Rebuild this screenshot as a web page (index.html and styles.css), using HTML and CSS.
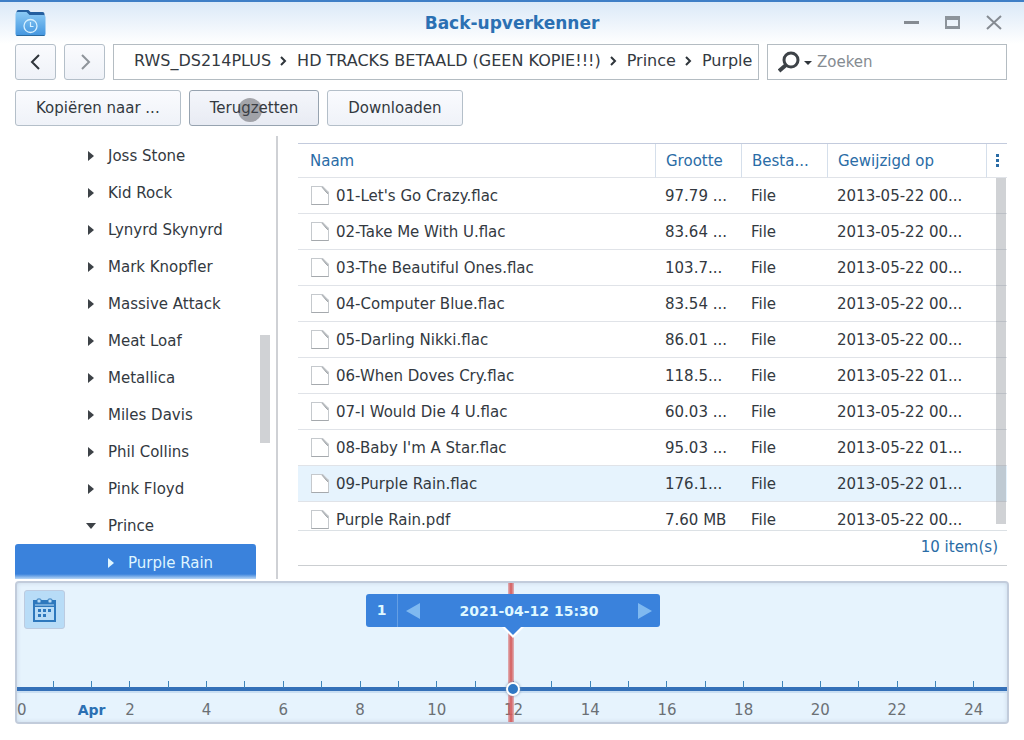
FILE: index.html
```
<!DOCTYPE html>
<html lang="nl">
    <head>
        <meta charset="utf-8" />
        <title>Back-upverkenner</title>
        <link rel="stylesheet" href="styles.css">
    </head>
    <body>
        <header class="titlebar">
            <svg class="app-icon" viewBox="0 0 30 28" aria-hidden="true">
                <defs>
                    <linearGradient id="folder" x1="0" y1="0" x2="0" y2="1">
                        <stop offset="0" stop-color="#8bcaf5" />
                        <stop offset="1" stop-color="#4295df" />
                    </linearGradient>
                </defs>
                <path d="M1 3q0-2 2-2h10l2 2h12q2 0 2 2v4H1z" fill="#245f9f" />
                <path d="M0 5q0-2 2-2h9l3 3h14q2 0 2 2v17q0 2-2 2H2q-2 0-2-2z" fill="url(#folder)" />
                <path d="M1 26.500h28" stroke="#28699f" />
                <circle cx="15" cy="17" r="6.500" fill="none" stroke="#d7f0ff" stroke-width="1.300" />
                <path d="M15 13v4.500h3" fill="none" stroke="#d7f0ff" stroke-width="1.200" />
            </svg>
            <h1>Back-upverkenner</h1>
            <div class="window-buttons">
                <button type="button" aria-label="Minimaliseren">
                    <svg viewBox="0 0 16 16"><path d="M0 7.500h15" stroke="#858b92" stroke-width="3" /></svg>
                </button>
                <button type="button" aria-label="Maximaliseren">
                    <svg viewBox="0 0 16 16"><path d="M0 1h15v13H0zM2 5v6h11V5z" fill="#8d949b" fill-rule="evenodd" /></svg>
                </button>
                <button type="button" aria-label="Sluiten">
                    <svg viewBox="0 0 16 16"><path d="M1 1l14 13M15 1L1 14" stroke="#858b92" stroke-width="2" /></svg>
                </button>
            </div>
        </header>

        <div class="toolbar">
            <button type="button" class="nav-button" aria-label="Vorige">
                <svg viewBox="0 0 16 16"><path d="M11 1L4 8l7 7" fill="none" stroke="#2f353b" stroke-width="2" /></svg>
            </button>
            <button type="button" class="nav-button forward" aria-label="Volgende">
                <svg viewBox="0 0 16 16"><path d="M5 1l7 7-7 7" fill="none" stroke="#8e949a" stroke-width="2" /></svg>
            </button>
            <nav class="path">
                <a href="#">RWS_DS214PLUS</a>
                <svg viewBox="0 0 8 10"><path d="M1 1l4 4-4 4" /></svg>
                <a href="#">HD TRACKS BETAALD (GEEN KOPIE!!!)</a>
                <svg viewBox="0 0 8 10"><path d="M1 1l4 4-4 4" /></svg>
                <a href="#">Prince</a>
                <svg viewBox="0 0 8 10"><path d="M1 1l4 4-4 4" /></svg>
                <a href="#">Purple</a>
            </nav>
            <label class="search">
                <svg viewBox="0 0 36 22" aria-hidden="true">
                    <circle cx="13" cy="9" r="7" fill="none" stroke="#3d4247" stroke-width="3" />
                    <path d="M8 14l-7 6" stroke="#3d4247" stroke-width="4" />
                    <path d="M26 10h8l-4 4z" fill="#2f353b" />
                </svg>
                <input type="text" placeholder="Zoeken" aria-label="Zoeken" />
            </label>
        </div>

        <div class="actions">
            <button type="button">Kopiëren naar ...</button>
            <button type="button" class="pressed">Terugzetten</button>
            <button type="button">Downloaden</button>
        </div>

        <main>
            <div class="tree">
                <ul>
                    <li>Joss Stone</li>
                    <li>Kid Rock</li>
                    <li>Lynyrd Skynyrd</li>
                    <li>Mark Knopfler</li>
                    <li>Massive Attack</li>
                    <li>Meat Loaf</li>
                    <li>Metallica</li>
                    <li>Miles Davis</li>
                    <li>Phil Collins</li>
                    <li>Pink Floyd</li>
                    <li class="open">Prince</li>
                    <li class="selected">Purple Rain</li>
                </ul>
                <div class="tree-thumb"></div>
            </div>

            <div class="files">
                <div class="file-list">
                    <table>
                        <colgroup>
                            <col />
                            <col class="col-size" />
                            <col class="col-type" />
                            <col class="col-date" />
                            <col class="col-menu" />
                        </colgroup>
                        <thead>
                            <tr>
                                <th>Naam</th>
                                <th>Grootte</th>
                                <th>Besta...</th>
                                <th>Gewijzigd op</th>
                                <th class="menu"><button type="button" aria-label="Kolommen"><i></i><i></i><i></i></button></th>
                            </tr>
                        </thead>
                        <tbody>
                            <tr><td><span class="file">01-Let's Go Crazy.flac</span></td><td>97.79 ...</td><td>File</td><td colspan="2">2013-05-22 00...</td></tr>
                            <tr><td><span class="file">02-Take Me With U.flac</span></td><td>83.64 ...</td><td>File</td><td colspan="2">2013-05-22 00...</td></tr>
                            <tr><td><span class="file">03-The Beautiful Ones.flac</span></td><td>103.7...</td><td>File</td><td colspan="2">2013-05-22 00...</td></tr>
                            <tr><td><span class="file">04-Computer Blue.flac</span></td><td>83.54 ...</td><td>File</td><td colspan="2">2013-05-22 00...</td></tr>
                            <tr><td><span class="file">05-Darling Nikki.flac</span></td><td>86.01 ...</td><td>File</td><td colspan="2">2013-05-22 00...</td></tr>
                            <tr><td><span class="file">06-When Doves Cry.flac</span></td><td>118.5...</td><td>File</td><td colspan="2">2013-05-22 01...</td></tr>
                            <tr><td><span class="file">07-I Would Die 4 U.flac</span></td><td>60.03 ...</td><td>File</td><td colspan="2">2013-05-22 00...</td></tr>
                            <tr><td><span class="file">08-Baby I'm A Star.flac</span></td><td>95.03 ...</td><td>File</td><td colspan="2">2013-05-22 01...</td></tr>
                            <tr class="hover"><td><span class="file">09-Purple Rain.flac</span></td><td>176.1...</td><td>File</td><td colspan="2">2013-05-22 01...</td></tr>
                            <tr><td><span class="file">Purple Rain.pdf</span></td><td>7.60 MB</td><td>File</td><td colspan="2">2013-05-22 00...</td></tr>
                        </tbody>
                    </table>
                    <div class="list-thumb"></div>
                </div>
                <div class="status">10 item(s)</div>
            </div>
        </main>

        <section class="timeline">
            <button type="button" class="calendar" aria-label="Kalender">
                <svg viewBox="0 0 24 24">
                    <path d="M0 2h23v22H0zM2 9v13h19V9z" fill="#2d78bd" fill-rule="evenodd" />
                    <path d="M2 7h19" stroke="#b8dcf7" />
                    <rect x="4" y="1" width="4" height="4" rx="1" fill="#b8dcf7" stroke="#2d78bd" />
                    <rect x="15" y="1" width="4" height="4" rx="1" fill="#b8dcf7" stroke="#2d78bd" />
                    <path d="M5 11h3v3H5zM10 11h3v3h-3zM15 11h3v3h-3zM5 16h3v3H5zM10 16h3v3h-3z" fill="#2d78bd" />
                </svg>
            </button>
            <ol class="hours">
                <li class="edge">0</li>
                <li></li>
                <li class="month">Apr</li>
                <li>2</li><li></li>
                <li>4</li><li></li>
                <li>6</li><li></li>
                <li>8</li><li></li>
                <li>10</li><li></li>
                <li>12</li><li></li>
                <li>14</li><li></li>
                <li>16</li><li></li>
                <li>18</li><li></li>
                <li>20</li><li></li>
                <li>22</li><li></li>
                <li>24</li>
            </ol>
            <div class="now-line"></div>
            <div class="knob"></div>
            <div class="bubble">
                <span class="count">1</span>
                <button type="button" aria-label="Vorige versie"><svg viewBox="0 0 14 16"><path d="M14 0v16L0 8z" /></svg></button>
                <time datetime="2021-04-12T15:30">2021-04-12 15:30</time>
                <button type="button" aria-label="Volgende versie"><svg viewBox="0 0 14 16"><path d="M0 0v16l14-8z" /></svg></button>
            </div>
        </section>
    </body>
</html>
```
FILE: styles.css
```
*, *::before, *::after {
    box-sizing: border-box;
}
html, body {
    height: 100vh;
    margin: 0;
    padding: 0;
}
body {
    display: flex;
    flex-direction: column;
    overflow: hidden;
    border-top: 2px solid #3f7fc6;
    padding: 0 15px 16px;
    background: linear-gradient(#d9e8f7, #fff 44px);
    color: #33393f;
    font: 15px/20px "DejaVu Sans", Verdana, sans-serif;
}
button, input {
    font: inherit;
    color: inherit;
}
button {
    margin: 0;
    padding: 0;
    border: 0;
    background: none;
}
svg {
    display: block;
    flex: none;
}
ul, ol {
    margin: 0;
    padding: 0;
    list-style: none;
}

/* title bar */
.titlebar {
    display: grid;
    grid-template-columns: 1fr auto 1fr;
    align-items: center;
    height: 42px;
}
.app-icon {
    width: 31px;
    height: 28px;
}
.titlebar h1 {
    margin: 0;
    color: #2b70b3;
    font-size: 17px;
    line-height: 20px;
}
.window-buttons {
    display: flex;
    justify-content: flex-end;
    gap: 25px;
    padding-right: 7px;
}
.window-buttons svg {
    width: 16px;
    height: 16px;
}

/* navigation */
.toolbar {
    display: flex;
    gap: 8px;
    height: 36px;
    padding-right: 2px;
}
.nav-button, .actions button {
    border: 1px solid #b4bfc9;
    border-radius: 3px;
    background: linear-gradient(#fafbfe, #eff2f8);
}
.nav-button {
    display: flex;
    align-items: center;
    justify-content: center;
    width: 41px;
}
.nav-button svg {
    width: 16px;
    height: 16px;
}
.path {
    display: flex;
    flex: 1;
    align-items: center;
    gap: 9px;
    min-width: 0;
    overflow: hidden;
    padding: 0 0 2px 20px;
    border: 1px solid #b4bcc2;
    background: #fff;
    font-size: 16px;
    white-space: nowrap;
}
.path a {
    color: inherit;
    text-decoration: none;
}
.path svg {
    width: 8px;
    height: 10px;
    fill: none;
    stroke: #2f353b;
    stroke-width: 2;
}
.search {
    display: flex;
    align-items: center;
    gap: 3px;
    width: 240px;
    padding: 0 10px;
    border: 1px solid #b4bcc2;
    background: #fff;
}
.search svg {
    width: 36px;
    height: 22px;
}
.search input {
    flex: 1;
    min-width: 0;
    padding: 0;
    border: 0;
    outline: 0;
    background: none;
}
.search input::placeholder {
    color: #858b91;
    opacity: 1;
}
.actions {
    display: flex;
    gap: 8px;
    padding: 10px 0;
}
.actions button {
    position: relative;
    height: 36px;
    padding: 0 20px;
}
.actions .pressed {
    border-color: #97a3b0;
    background: linear-gradient(#f4f6fb, #e8ebf3);
}
/* touch mark on the pressed button */
.pressed::after {
    content: "";
    position: absolute;
    top: 7px;
    left: 48px;
    width: 24px;
    height: 24px;
    border-radius: 50%;
    background: rgba(70, 70, 75, 0.450);
}

/* folders and files */
main {
    display: flex;
    flex: 1;
    min-height: 0;
    gap: 20px;
}
.tree {
    position: relative;
    width: 263px;
    overflow: hidden;
    padding: 1px 20px 0 0;
    border-right: 2px solid #cfd1d5;
}
.tree li {
    display: flex;
    align-items: center;
    gap: 14px;
    height: 37px;
    padding-left: 73px;
}
.tree li::before {
    content: "";
    border: solid transparent;
    border-width: 5px 0 5px 6px;
    border-left-color: #3d4247;
}
.tree li.open {
    gap: 12px;
    padding-left: 71px;
}
.tree li.open::before {
    border-width: 6px 5px 0;
    border-color: #3d4247 transparent;
}
.tree li.selected {
    padding-left: 93px;
    border-radius: 3px 3px 0 0;
    background: linear-gradient(#3a82dc 30px, #b9d7f5 35px);
    color: #dff5ff;
}
.tree li.selected::before {
    border-left-color: #dff5ff;
}
.tree-thumb, .list-thumb {
    position: absolute;
    width: 10px;
    background: rgba(110, 115, 125, 0.320);
}
.tree-thumb {
    top: 45%;
    right: 6px;
    height: 108px;
}
.files {
    display: flex;
    flex: 1;
    flex-direction: column;
    min-width: 0;
    padding: 7px 2px 13px 0;
}
.file-list {
    position: relative;
    flex: 1;
    min-height: 0;
    overflow: hidden;
    border-top: 1px solid #c3cbdd;
    border-bottom: 1px solid #dce1e5;
}
table {
    width: 100%;
    table-layout: fixed;
    border-collapse: separate;
    border-spacing: 0;
}
.col-size, .col-type {
    width: 86px;
}
.col-date {
    width: 159px;
}
.col-menu {
    width: 21px;
}
th, td {
    overflow: hidden;
    padding: 0 0 0 10px;
    border-bottom: 1px solid #e0e3e8;
    text-align: left;
    white-space: nowrap;
}
th {
    height: 34px;
    border-left: 1px solid #d5dfeb;
    color: #2a6ca6;
    font-weight: normal;
}
th:first-child {
    padding-left: 12px;
    border-left: 0;
}
td {
    height: 36px;
}
td:first-child {
    padding-left: 13px;
}
th.menu {
    padding: 0;
}
.menu button {
    display: grid;
    gap: 2px;
    margin: 0 auto;
}
.menu i {
    width: 3px;
    height: 3px;
    background: #2a6ca6;
}
.file {
    display: flex;
    align-items: center;
    gap: 7px;
}
.file::before {
    content: "";
    width: 18px;
    height: 19px;
    border: 1px solid #c5c9cd;
    border-bottom-color: #a5a9ad;
    background: linear-gradient(to top right, #fff 78%, #a5a9ad 79%, #dde0e3 90%);
    clip-path: polygon(0 0, 66% 0, 100% 32%, 100% 100%, 0 100%);
}
.hover td {
    background: #e6f3fd;
}
.list-thumb {
    top: 34px;
    right: 1px;
    bottom: 6px;
}
.status {
    height: 35px;
    padding: 6px 9px 0 0;
    border-bottom: 1px solid #cbced1;
    color: #2a6ca6;
    text-align: right;
}

/* timeline */
.timeline {
    position: relative;
    display: flex;
    flex-direction: column;
    gap: 52px;
    margin-top: 2px;
    overflow: hidden;
    border: 2px solid #c2ccdb;
    border-radius: 4px;
    background: #e6f3fd;
    box-shadow: inset 0 0 4px #c9d8e8;
}
.calendar {
    display: flex;
    align-items: center;
    justify-content: center;
    width: 41px;
    height: 39px;
    margin: 7px 0 0 7px;
    border: 1px solid #bccbe0;
    border-radius: 3px;
    background: #b8dcf7;
}
.calendar svg {
    width: 24px;
    height: 24px;
}
.hours {
    display: grid;
    grid-template-columns: 17px repeat(25, 1fr) 14px;
    background: linear-gradient(#3470b8 4px, #c9def2 4px) 0 6px / 100% 6px no-repeat;
    color: #6b7075;
}
.hours li {
    height: 41px;
    text-align: center;
    white-space: nowrap;
}
.hours li::before {
    content: "";
    display: block;
    width: 1px;
    height: 7px;
    margin: 0 auto 12px;
    background: #3f83b8;
}
.hours .edge {
    text-align: left;
}
.hours .edge::before {
    background: none;
}
.hours .month {
    color: #2b70b3;
    font-size: 14px;
    font-weight: bold;
}
.now-line {
    position: absolute;
    top: 0;
    bottom: 0;
    left: 50%;
    width: 6px;
    margin-left: -4px;
    background: linear-gradient(to right, rgba(215, 80, 80, 0.400), #d45c5c, rgba(215, 80, 80, 0.400));
}
.knob {
    position: absolute;
    bottom: 26px;
    left: 50%;
    width: 14px;
    height: 14px;
    margin-left: -6px;
    border: 2px solid #fff;
    border-radius: 50%;
    background: #2f78c4;
    box-shadow: 0 0 3px #7891ac;
}
.bubble {
    position: absolute;
    top: 11px;
    left: 50%;
    display: flex;
    align-items: center;
    width: 294px;
    height: 33px;
    margin-left: -146px;
    border-radius: 3px;
    background: #3a82dc;
    color: #dff8ff;
    font-size: 14px;
    font-weight: bold;
}
.bubble::before, .bubble::after {
    content: "";
    position: absolute;
    top: 100%;
    left: 50%;
    border: solid transparent;
    border-width: 8px 8px 0;
    border-top-color: #3a82dc;
    transform: translateX(-50%);
}
.bubble::before {
    border-width: 11px 11px 0;
    border-top-color: #fff;
}
.count {
    width: 32px;
    border-right: 1px solid #659fe4;
    line-height: 33px;
    text-align: center;
}
.bubble button {
    padding: 0 8px;
}
.bubble svg {
    width: 14px;
    height: 16px;
    fill: #7fb9f0;
}
.bubble time {
    flex: 1;
    text-align: center;
}
```
